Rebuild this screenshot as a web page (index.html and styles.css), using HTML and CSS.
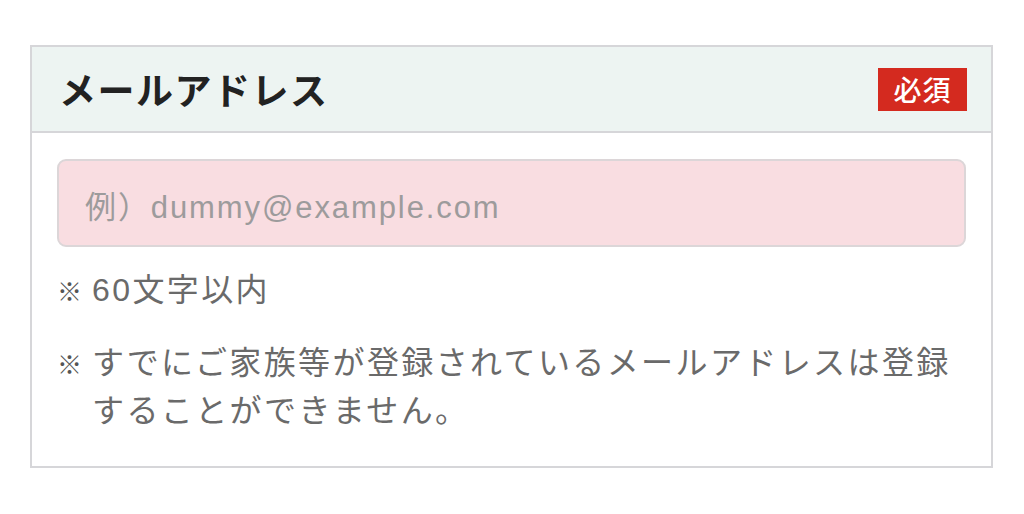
FILE: index.html
```html
<!DOCTYPE html>
<html lang="ja">
<head>
<meta charset="utf-8">
<title>メールアドレス</title>
<link rel="stylesheet" href="styles.css">
</head>
<body>
<section class="field">
  <header class="field-head">
    <h2 class="field-title">メールアドレス</h2>
    <span class="badge">必須</span>
  </header>
  <div class="field-body">
    <div class="input">例）dummy@example.com</div>
    <ul class="notes">
      <li class="note"><span class="mark">※</span><span class="note-text">60文字以内</span></li>
      <li class="note"><span class="mark">※</span><span class="note-text">すでにご家族等が登録されているメールアドレスは登録することができません。</span></li>
    </ul>
  </div>
</section>
</body>
</html>
```
FILE: styles.css
```css
html, body {
  margin: 0;
  background: #ffffff;
}
body {
  padding: 45px 0 0 30px;
  font-family: "Liberation Sans", "Noto Sans CJK JP", sans-serif;
}
.field {
  box-sizing: border-box;
  width: 963px;
  border: 2px solid #d6d6d9;
}
.field-head {
  box-sizing: border-box;
  height: 86px;
  display: flex;
  align-items: center;
  justify-content: space-between;
  padding: 0 24px 0 27px;
  background: #edf4f2;
  border-bottom: 2px solid #d6d6d9;
}
.field-title {
  margin: 0;
  font-family: "Noto Sans CJK JP", sans-serif;
  font-weight: 700;
  font-size: 37px;
  letter-spacing: 1.5px;
  color: #222222;
  line-height: 1;
}
.badge {
  display: flex;
  align-items: center;
  justify-content: center;
  width: 89px;
  height: 43px;
  background: #d42a1f;
  color: #ffffff;
  font-family: "Noto Sans CJK JP", sans-serif;
  font-weight: 500;
  font-size: 28px;
  letter-spacing: 1px;
  line-height: 1;
}
.field-body {
  padding: 26px 25px 31px 25px;
}
.input {
  box-sizing: border-box;
  height: 88px;
  display: flex;
  align-items: center;
  padding: 2px 0 0 26px;
  background: #f9dde1;
  border: 2px solid #dcd6d8;
  border-radius: 9px;
  font-size: 31px;
  letter-spacing: 1.9px;
  color: #9d9b9c;
}
.notes {
  list-style: none;
  margin: 19px 0 0 0;
  padding: 0;
}
.note {
  display: flex;
  align-items: flex-start;
  font-size: 32px;
  line-height: 48px;
  letter-spacing: 2.4px;
  color: #6a6a6a;
}
.note + .note {
  margin-top: 25px;
}
.mark {
  flex: none;
  width: 35px;
  font-family: "Noto Sans CJK JP", sans-serif;
  font-weight: 700;
  font-size: 25px;
  letter-spacing: 0;
  color: #555555;
}
.note-text {
  flex: 1;
}
```
